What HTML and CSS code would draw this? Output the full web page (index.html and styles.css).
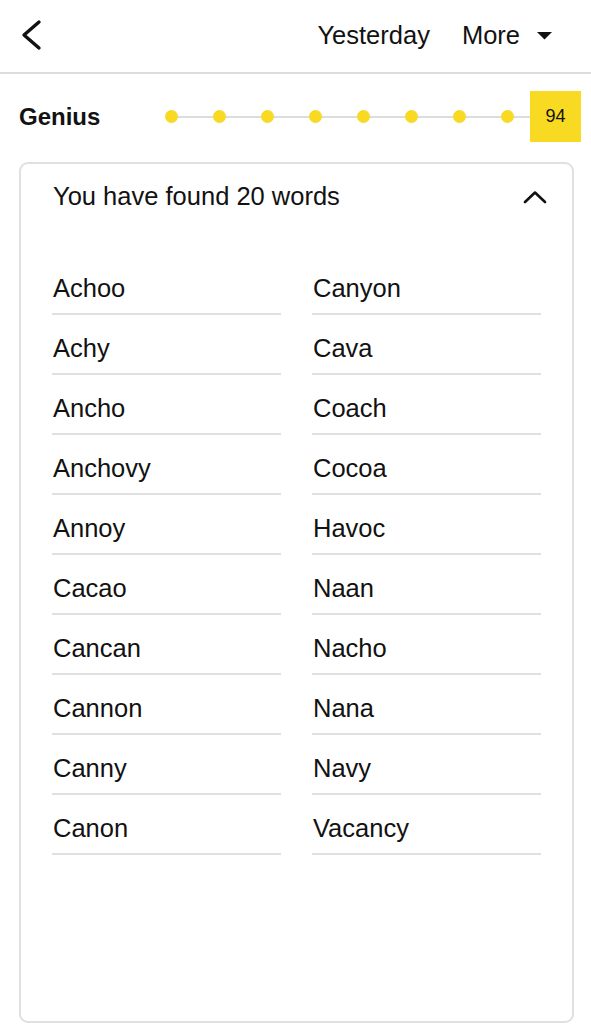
FILE: index.html
```html
<!DOCTYPE html>
<html lang="en">
<head>
<meta charset="utf-8">
<title>Spelling Bee – Yesterday</title>
<link rel="stylesheet" href="styles.css">
</head>
<body>
  <header class="topbar">
    <button class="back" aria-label="Back">
      <svg width="22" height="32" viewBox="0 0 22 32"><path d="M18 3 L3 16 L18 29" fill="none" stroke="#121212" stroke-width="3.4" stroke-linecap="round" stroke-linejoin="round"/></svg>
    </button>
    <nav class="nav">
      <span class="nav-item">Yesterday</span>
      <span class="nav-item more">More
        <svg class="caret" width="15" height="8" viewBox="0 0 15 8"><path d="M0 0 H15 L7.5 7.5 Z" fill="#121212"/></svg>
      </span>
    </nav>
  </header>

  <section class="progress">
    <span class="rank">Genius</span>
    <div class="track">
      <span class="dot"></span><span class="dot"></span><span class="dot"></span><span class="dot"></span>
      <span class="dot"></span><span class="dot"></span><span class="dot"></span><span class="dot"></span>
    </div>
    <span class="score">94</span>
  </section>

  <section class="card">
    <div class="card-head">
      <span class="found">You have found 20 words</span>
      <svg class="chev" width="24" height="14" viewBox="0 0 24 14"><path d="M2 12 L12 2.5 L22 12" fill="none" stroke="#121212" stroke-width="2.6" stroke-linecap="round" stroke-linejoin="round"/></svg>
    </div>
    <div class="words">
      <ul class="col">
        <li>Achoo</li><li>Achy</li><li>Ancho</li><li>Anchovy</li><li>Annoy</li>
        <li>Cacao</li><li>Cancan</li><li>Cannon</li><li>Canny</li><li>Canon</li>
      </ul>
      <ul class="col">
        <li>Canyon</li><li>Cava</li><li>Coach</li><li>Cocoa</li><li>Havoc</li>
        <li>Naan</li><li>Nacho</li><li>Nana</li><li>Navy</li><li>Vacancy</li>
      </ul>
    </div>
  </section>
</body>
</html>
```

FILE: styles.css
```css
* { box-sizing: border-box; }

html, body {
  margin: 0;
  padding: 0;
  background: #ffffff;
  color: #121212;
  font-family: "Liberation Sans", Arial, sans-serif;
  overflow: hidden;
}

.topbar {
  height: 74px;
  display: flex;
  align-items: center;
  padding: 0 39px 2px 21px;
  border-bottom: 2px solid #dcdcdc;
}

.back {
  border: 0;
  background: none;
  padding: 0;
  margin: 0;
  width: 22px;
  height: 32px;
  display: block;
}
.back svg { display: block; }

.nav {
  margin-left: auto;
  display: flex;
  align-items: center;
  gap: 32px;
  font-size: 25.5px;
  line-height: 30px;
}

.nav-item { display: inline-flex; align-items: center; }
.more .caret { margin-left: 17px; margin-top: 2px; }

.progress {
  display: flex;
  align-items: center;
  height: 51px;
  margin-top: 17px;
  padding: 0 10px 0 19px;
}

.rank {
  flex: 0 0 146px;
  font-weight: 700;
  font-size: 24px;
  line-height: 30px;
}

.track {
  flex: 1;
  position: relative;
  display: flex;
  align-items: center;
  gap: 35px;
  height: 51px;
}
.track::before {
  content: "";
  position: absolute;
  left: 6px;
  right: 0;
  top: 50%;
  height: 2px;
  margin-top: -1px;
  background: #dcdcdc;
}

.dot {
  position: relative;
  width: 13px;
  height: 13px;
  border-radius: 50%;
  background: #f7da21;
}

.score {
  flex: 0 0 51px;
  height: 51px;
  background: #f7da21;
  display: flex;
  align-items: center;
  justify-content: center;
  font-size: 18px;
}

.card {
  margin: 20px 17px 0 19px;
  height: 861px;
  border: 2px solid #e0e0e0;
  border-radius: 9px;
}

.card-head {
  display: flex;
  align-items: center;
  justify-content: space-between;
  height: 64px;
  padding: 0 25px 0 32px;
}
.found { font-size: 25.5px; line-height: 30px; }
.chev { display: block; margin-top: 2px; }

.words {
  display: grid;
  grid-template-columns: 1fr 1fr;
  column-gap: 31px;
  padding: 27px 31px 0 31px;
}

.col {
  list-style: none;
  margin: 0;
  padding: 0;
}
.col li {
  height: 60px;
  padding: 19px 0 0 1px;
  font-size: 25.5px;
  line-height: 28px;
  border-bottom: 2px solid #e0e0e0;
}
```
